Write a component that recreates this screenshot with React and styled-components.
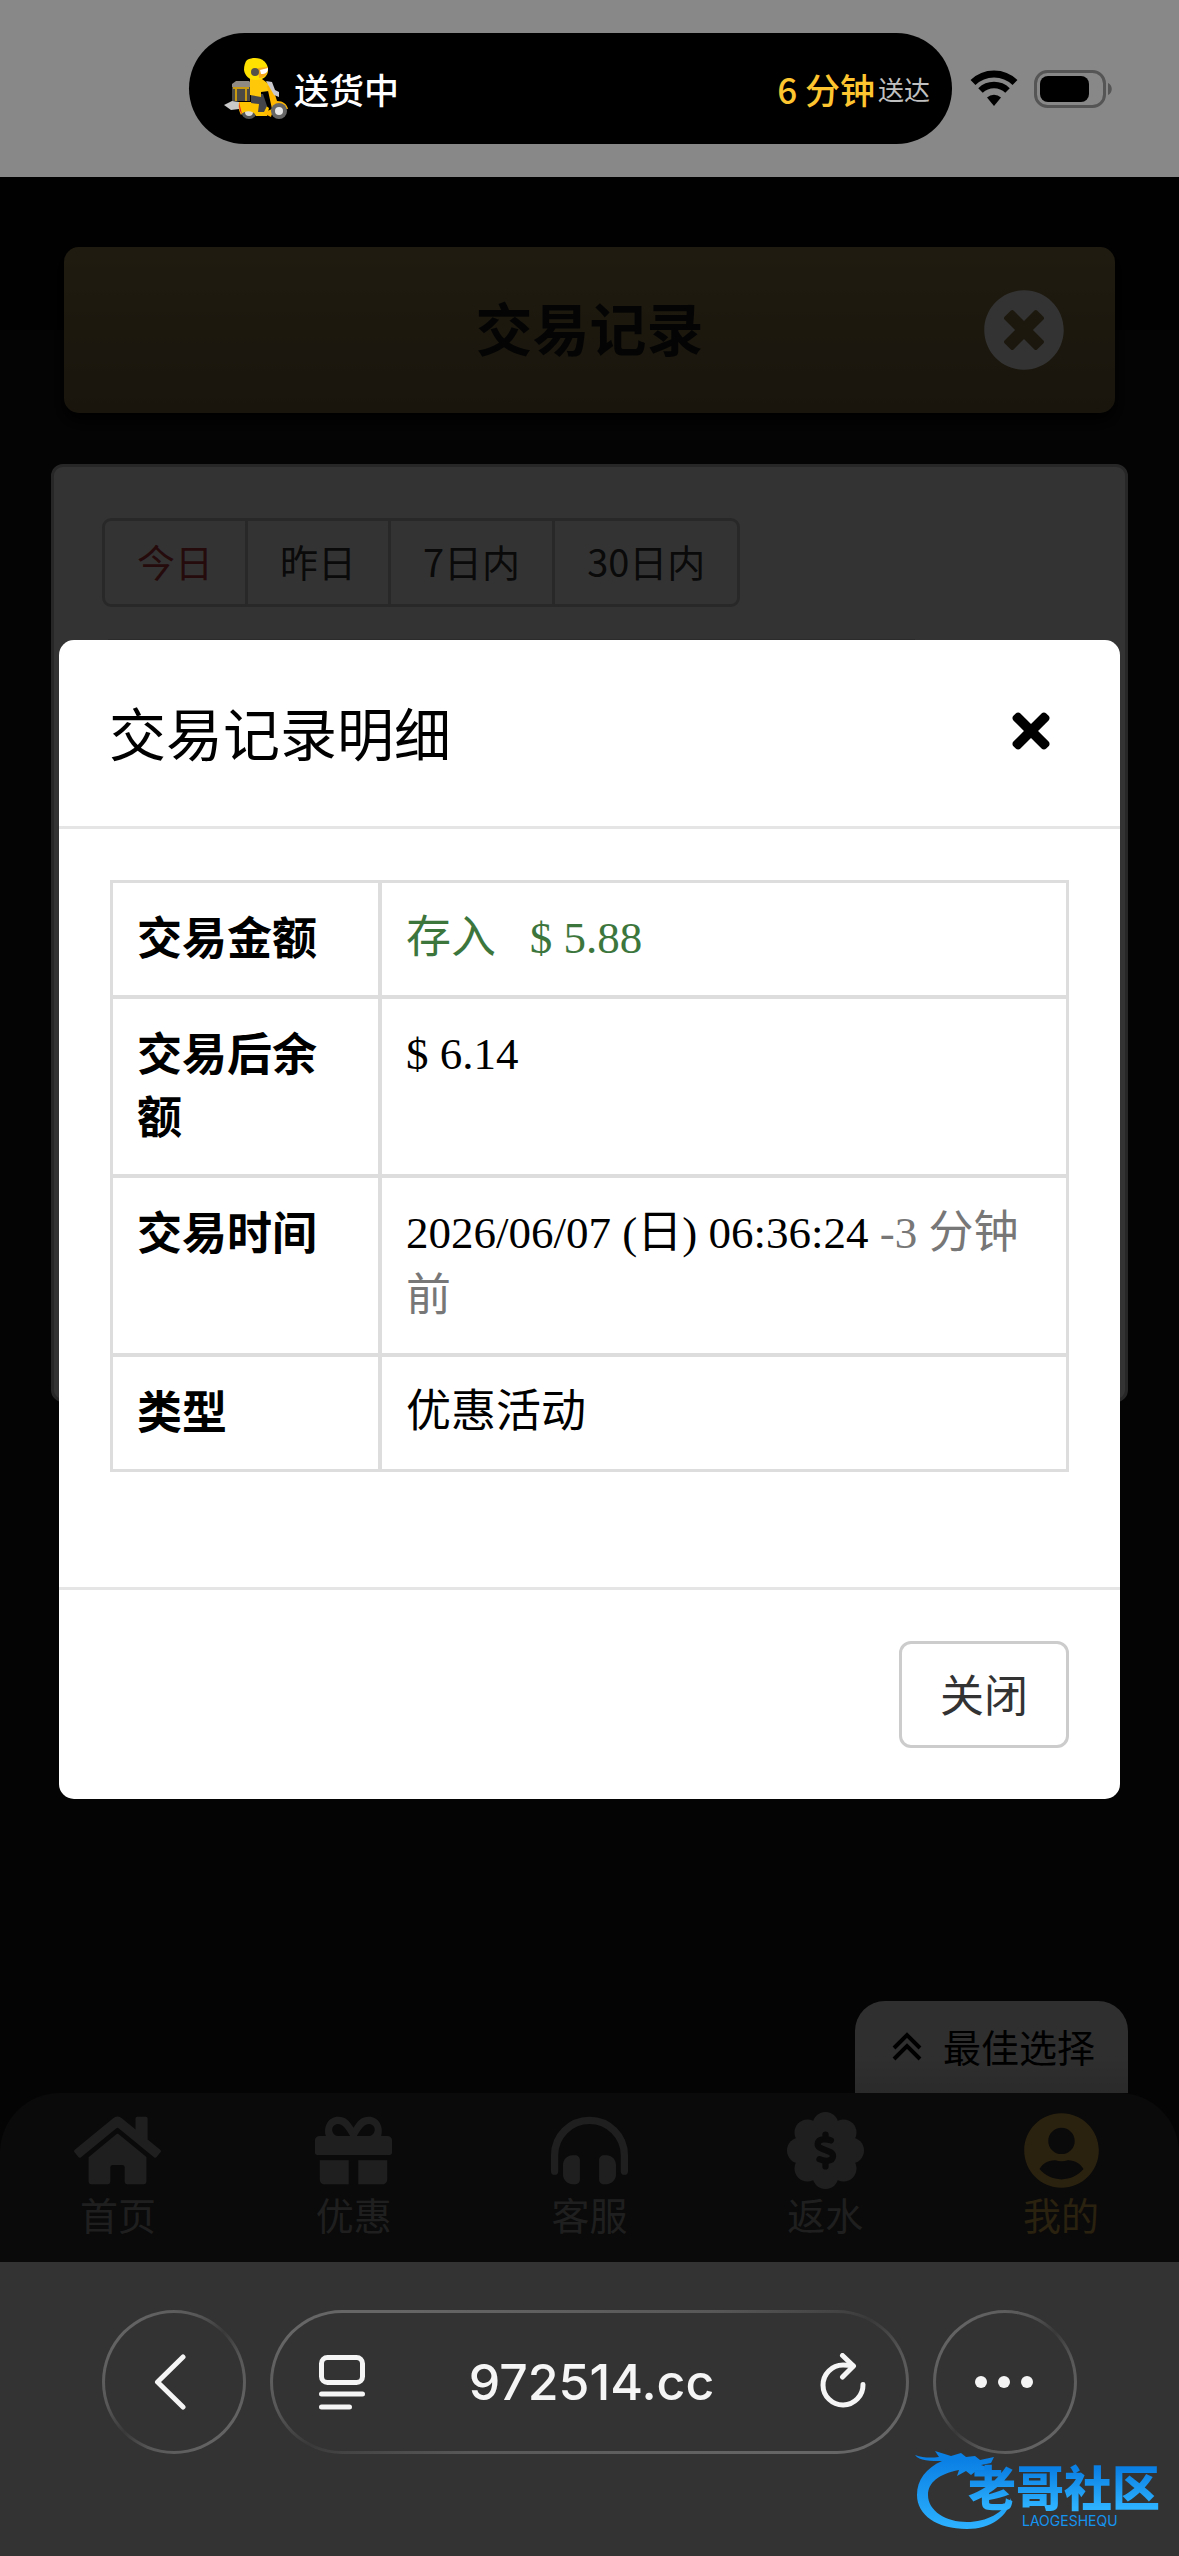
import React from 'react'
import styled, { createGlobalStyle } from 'styled-components'
import { FaHome, FaTimes, FaTimesCircle, FaUserCircle } from 'react-icons/fa'

const GlobalStyle = createGlobalStyle`
  * {
    box-sizing: border-box;
  }

  body {
    margin: 0;
    background-color: #333;
    font-family: "Noto Sans CJK SC", sans-serif;
    font-size: 38px;
    line-height: 54px;
    color: #000;
  }

  button, input {
    font: inherit;
    color: inherit;
    background: none;
    border: none;
    padding: 0;
  }

  button {
    cursor: pointer;
  }

  a {
    color: inherit;
    text-decoration: none;
  }

  svg {
    display: block;
    flex-shrink: 0;
  }
`;

const Screen = styled.div`
  position: relative;
  min-height: 100vh;
  display: flex;
  flex-direction: column;
  overflow: hidden;
`;

/* status bar */

const StatusBar = styled.header`
  height: 177px;
  display: flex;
  align-items: center;
  padding: 0 66px 0 189px;
  background-color: #888;
`;

const Island = styled.div`
  flex: 1;
  height: 111px;
  display: flex;
  align-items: center;
  gap: 6px;
  padding: 0 22px 0 34px;
  border-radius: 56px;
  background-color: #000;
  font-size: 35px;
  line-height: 50px;
  font-weight: 500;
  color: #fff;
`;

const Eta = styled.div`
  display: flex;
  align-items: center;
  gap: 3px;
  margin-left: auto;
  color: #fdc52f;
`;

const EtaNote = styled.span`
  font-size: 26px;
  font-weight: 400;
  color: #c0c0c0;
`;

const Indicators = styled.div`
  display: flex;
  gap: 16px;
  margin-left: 18px;
`;

/* page */

const Page = styled.div`
  position: relative;
  flex: 1;
  display: flex;
  flex-direction: column;
  background: linear-gradient(#060606 153px, #161616 153px);
`;

const Main = styled.main`
  flex: 1;
  display: flex;
  flex-direction: column;
  padding: 70px 51px 0;
`;

const TitleBar = styled.div`
  height: 166px;
  display: grid;
  grid-template-columns: 1fr auto 1fr;
  align-items: center;
  margin: 0 13px;
  padding: 0 50px;
  border-radius: 15px;
  background: linear-gradient(#9d8850, #7d6940);
  box-shadow: 0 8px 16px #000;
`;

const PageTitle = styled.h1`
  grid-column: 2;
  margin: 0;
  padding-bottom: 8px;
  font-size: 57px;
  line-height: 80px;
  font-weight: 700;
  color: #181818;
`;

const RoundClose = styled.button`
  justify-self: end;
  color: #fff;
`;

const Card = styled.section`
  min-height: 938px;
  margin-top: 51px;
  padding: 51px 48px;
  border: 3px solid #c4c4c4;
  border-radius: 12px;
  background-color: #fff;
`;

const RangeGroup = styled.div`
  display: flex;
  width: fit-content;
  border: 3px solid #c8c8c8;
  border-radius: 9px;
`;

const RangeButton = styled.button`
  height: 83px;
  padding: 0 32px 4px;
  color: ${({ $active }) => ($active ? '#b8393c' : '#333')};

  & + & {
    border-left: 3px solid #c8c8c8;
  }
`;

const Divider = styled.hr`
  margin: 32px 162px 0 6px;
  border: none;
  border-top: 3px solid #d4d4d4;
`;

const PromoTab = styled.button`
  height: 92px;
  display: flex;
  align-items: center;
  align-self: flex-end;
  gap: 20px;
  margin-top: auto;
  padding: 0 33px 2px 36px;
  border-radius: 30px 30px 0 0;
  background: linear-gradient(#e8e8e8 65%, #d2d2d2);
`;

const BottomNav = styled.nav`
  height: 169px;
  display: grid;
  grid-template-columns: repeat(5, 1fr);
  border-radius: 60px 60px 0 0;
  background-color: #323232;
`;

const NavLink = styled.a`
  display: flex;
  flex-direction: column;
  align-items: center;
  padding-top: 19px;
  line-height: 50px;
  color: ${({ $active }) => ($active ? '#d2a54b' : '#9a9a9a')};

  svg {
    width: 87px;
    height: 77px;
  }
`;

/* dialog */

const Backdrop = styled.div`
  position: absolute;
  inset: 0;
  padding: 463px 59px 0;
  background-color: rgba(0, 0, 0, 0.8);
`;

const Dialog = styled.section`
  border-radius: 15px;
  background-color: #fff;
  font-size: 45px;
  line-height: 63px;
`;

const DialogHeader = styled.div`
  height: 189px;
  display: flex;
  align-items: center;
  justify-content: space-between;
  padding: 0 62px 4px 50px;
  border-bottom: 3px solid #e5e5e5;
`;

const DialogTitle = styled.h2`
  margin: 0;
  font-size: 57px;
  line-height: 80px;
  font-weight: 400;
`;

const DialogBody = styled.div`
  padding: 51px 51px 115px;
`;

const DialogFooter = styled.div`
  display: flex;
  justify-content: flex-end;
  padding: 51px;
  border-top: 3px solid #e5e5e5;
`;

const DefaultButton = styled.button`
  height: 107px;
  padding: 0 38px 2px;
  border: 3px solid #ccc;
  border-radius: 12px;
  font-size: 44px;
  color: #333;
`;

const DetailTable = styled.table`
  width: 100%;
  table-layout: fixed;
  border: 3px solid #ddd;
  border-spacing: 0;

  th, td {
    padding: 24px 24px 25px;
    text-align: left;
    vertical-align: top;
  }

  th {
    width: 269px;
    padding: 21px 24px 28px;
    border-right: 4px solid #ddd;
    font-weight: 700;
  }

  td {
    font-family: "Liberation Serif", "Noto Sans CJK SC", serif;
  }

  tr + tr th, tr + tr td {
    border-top: 4px solid #ddd;
  }
`;

const Income = styled.span`
  color: #3c763d;
`;

const Muted = styled.span`
  color: #777;
`;

/* browser bar */

const BrowserBar = styled.footer`
  height: 294px;
  display: flex;
  align-items: flex-start;
  gap: 24px;
  padding: 48px 102px 0;
  background-color: #333;
  color: #f5f5f5;
`;

const glass = `
  height: 144px;
  border: 3px solid transparent;
  border-radius: 72px;
  background:
    linear-gradient(#333, #333) padding-box,
    linear-gradient(to bottom right, #666 10%, #585858 35%, #393939 50%, #585858 65%, #666 90%) border-box;
`;

const RoundButton = styled.button`
  ${glass}
  width: 144px;
  display: flex;
  align-items: center;
  justify-content: center;
`;

const AddressBar = styled.div`
  ${glass}
  flex: 1;
  min-width: 0;
  display: flex;
  align-items: center;
  padding: 0 40px 0 44px;
`;

const Address = styled.input`
  flex: 1;
  min-width: 0;
  font-family: Inter, sans-serif;
  font-size: 50px;
  line-height: 60px;
  font-weight: 500;
  text-align: center;
  outline: none;
`;

const Watermark = styled.div`
  position: absolute;
  right: 19px;
  bottom: 27px;
  color: #1593f0;
`;

const WatermarkDragon = styled.svg`
  position: absolute;
  right: 146px;
  bottom: 0;
`;

const WatermarkName = styled.div`
  position: relative;
  font-size: 48px;
  line-height: 56px;
  font-weight: 900;
  background: linear-gradient(#0a7fe4 20%, #2db2ff 90%);
  background-clip: text;
  color: transparent;
`;

const WatermarkLatin = styled.div`
  padding-left: 54px;
  font-family: Inter, sans-serif;
  font-size: 14px;
  line-height: 16px;
`;

const Scooter = () => (
  <svg width="65" height="62" viewBox="0 0 65 62">
    <path d="M1 47l8-4 7 1v7l-8 1z" fill="#c9c9c9" />
    <path d="M9 26l4-3h13l3 3-2 4H9z" fill="#8f8a83" />
    <path d="M9 29h18v14H9z" fill="#4b4a45" />
    <path d="M10 30h16M13 30v13M23 30v13" stroke="#c79a12" strokeWidth="2" fill="none" />
    <circle cx="26" cy="53" r="8" fill="#555" />
    <circle cx="26" cy="54" r="4" fill="#ddd" />
    <path d="M16 44h22l8 6-2 8H33c-2-6-12-6-15-1-2-4-3-8-2-13z" fill="#ffc400" />
    <path d="M16 44l3 12c-2-1-3-6-3-12z" fill="#e5202a" />
    <path d="M28 36h12l4 12-3 6h-6l1-8-8-1z" fill="#44454a" />
    <path d="M27 20l12 1 8 6-1 6-8 1v5l-11-2z" fill="#ffc808" />
    <path d="M44 28l5-1 5 16c6 0 10 3 11 8h-9c-4 0-7 4-8 8l-8-4 9-4z" fill="#ffb700" />
    <path d="M43 23l6 1 3 8 4 2v5l-5-2z" fill="#c9c9cd" />
    <circle cx="56" cy="53" r="8" fill="#666" />
    <circle cx="56" cy="53" r="4" fill="#e8e8e8" />
    <path d="M24 2c10-5 21 0 21 10 0 7-6 10-12 10-7 0-11-4-12-10 0-4 1-8 3-10z" fill="#ffe100" />
    <path d="M35 10l10-1c0 7-3 11-9 11z" fill="#f6a81c" />
    <path d="M37 12l8-2c0 4-2 6-7 6z" fill="#fff" />
    <circle cx="32" cy="14" r="4" fill="#54504a" />
  </svg>
)

const Wifi = () => (
  <svg width="48" height="36" viewBox="0 0 48 36" fill="none" stroke="#000">
    <path d="M3 12.500a30 30 0 0 1 42 0" strokeWidth="7" />
    <path d="M10.500 20.500a19.500 19.500 0 0 1 27 0" strokeWidth="6.500" />
    <path d="M24 36l-7-8.500a10.500 10.500 0 0 1 14 0z" fill="#000" stroke="none" />
  </svg>
)

const Battery = () => (
  <svg width="79" height="38" viewBox="0 0 79 38">
    <rect x="1.500" y="1.500" width="69" height="35" rx="12" fill="none" stroke="#555" strokeWidth="3" />
    <rect x="6" y="6" width="49" height="26" rx="8" fill="#000" />
    <path d="M74 13c5 2 5 10 0 12z" fill="#555" />
  </svg>
)

const GiftIcon = () => (
  <svg viewBox="0 0 512 512" fill="currentColor">
    <path d="M32 160h40c-18-64 18-128 82-128 48 0 72 26 102 72 30-46 54-72 102-72 64 0 100 64 82 128h40c18 0 32 12 32 28v82c0 9-7 16-16 16H16c-9 0-16-7-16-16v-82c0-16 14-28 32-28zm114 0h88c-30-52-52-80-80-80-46 0-56 62-8 80zm132 0h88c48-18 38-80-8-80-28 0-50 28-80 80z" fillRule="evenodd" />
    <path d="M32 320h192v160H64c-18 0-32-14-32-32zM288 320h192v128c0 18-14 32-32 32H288z" />
  </svg>
)

const HeadphonesIcon = () => (
  <svg viewBox="0 0 512 512" fill="currentColor">
    <path d="M24 394V288a232 232 0 0 1 464 0v106" fill="none" stroke="currentColor" strokeWidth="48" strokeLinecap="round" />
    <path d="M144 288h16c18 0 32 14 32 32v128c0 18-14 32-32 32h-16c-36 0-64-29-64-64v-64c0-35 28-64 64-64zM368 288h-16c-18 0-32 14-32 32v128c0 18 14 32 32 32h16c36 0 64-29 64-64v-64c0-35-28-64-64-64z" />
  </svg>
)

const DollarBadge = () => (
  <svg viewBox="0 0 512 512">
    <g fill="currentColor">
      <circle cx="256" cy="256" r="190" />
      <circle cx="256" cy="86" r="86" />
      <circle cx="256" cy="426" r="86" />
      <circle cx="86" cy="256" r="86" />
      <circle cx="426" cy="256" r="86" />
      <circle cx="136" cy="136" r="86" />
      <circle cx="376" cy="136" r="86" />
      <circle cx="136" cy="376" r="86" />
      <circle cx="376" cy="376" r="86" />
    </g>
    <path d="M256 150v24M256 340v22M292 189c-30-12-84-14-88 23-4 46 104 34 102 82-2 40-58 34-90 20" fill="none" stroke="#323232" strokeWidth="42" strokeLinecap="round" strokeLinejoin="round" />
  </svg>
)

const ChevronsUp = () => (
  <svg width="32" height="30" viewBox="0 0 32 30" fill="none" stroke="#000" strokeWidth="4">
    <path d="M3 17L16 4l13 13M3 28l13-13 13 13" />
  </svg>
)

const Dragon = () => (
  <WatermarkDragon width="100" height="80" viewBox="0 0 100 80" aria-hidden="true">
    <defs>
      <linearGradient id="dragon" x1="0" y1="0" x2="0" y2="1">
        <stop offset="0.1" stopColor="#0a7fe4" />
        <stop offset="1" stopColor="#2db2ff" />
      </linearGradient>
    </defs>
    <path
      d="M1 6c8 3 16 3 24 2l-4-6 16 5 10-3 5 4 9-1 5 4 14-3-3 6-10 2 9 3-3 6-11-3-5 4-5-4-9 5 2-6C24 25 14 34 14 46c0 16 18 27 39 27 20 0 36-9 44-24-2 18-20 31-44 31C23 80 3 66 3 46 3 31 12 19 28 12 17 12 5 12 1 6z"
      fill="url(#dragon)"
    />
  </WatermarkDragon>
)

const ranges = ['今日', '昨日', '7日内', '30日内']

const navItems = [
  { label: '首页', icon: <FaHome /> },
  { label: '优惠', icon: <GiftIcon /> },
  { label: '客服', icon: <HeadphonesIcon /> },
  { label: '返水', icon: <DollarBadge /> },
  { label: '我的', icon: <FaUserCircle />, active: true },
]

const TransactionDialog = () => (
  <Dialog role="dialog" aria-labelledby="dialog-title">
    <DialogHeader>
      <DialogTitle id="dialog-title">交易记录明细</DialogTitle>
      <button type="button" aria-label="关闭"><FaTimes size={54} /></button>
    </DialogHeader>
    <DialogBody>
      <DetailTable>
        <tbody>
          <tr>
            <th scope="row">交易金额</th>
            <td><Income>存入{'\u00a0\u00a0 '}$ 5.88</Income></td>
          </tr>
          <tr>
            <th scope="row">交易后余额</th>
            <td>$ 6.14</td>
          </tr>
          <tr>
            <th scope="row">交易时间</th>
            <td>2026/06/07 (日) 06:36:24 <Muted>-3 分钟前</Muted></td>
          </tr>
          <tr>
            <th scope="row">类型</th>
            <td>优惠活动</td>
          </tr>
        </tbody>
      </DetailTable>
    </DialogBody>
    <DialogFooter>
      <DefaultButton type="button">关闭</DefaultButton>
    </DialogFooter>
  </Dialog>
)

const App = () => (
  <Screen>
    <GlobalStyle />
    <StatusBar>
      <Island>
        <Scooter />
        <span>送货中</span>
        <Eta>
          <span>6 分钟</span>
          <EtaNote>送达</EtaNote>
        </Eta>
      </Island>
      <Indicators>
        <Wifi />
        <Battery />
      </Indicators>
    </StatusBar>

    <Page>
      <Main>
        <TitleBar>
          <PageTitle>交易记录</PageTitle>
          <RoundClose type="button" aria-label="关闭"><FaTimesCircle size={82} /></RoundClose>
        </TitleBar>
        <Card>
          <RangeGroup>
            {ranges.map((range, i) => (
              <RangeButton key={range} type="button" $active={i === 0}>{range}</RangeButton>
            ))}
          </RangeGroup>
          <Divider />
        </Card>
        <PromoTab type="button">
          <ChevronsUp />
          最佳选择
        </PromoTab>
      </Main>
      <BottomNav>
        {navItems.map(({ label, icon, active }) => (
          <NavLink key={label} href="#" $active={active}>
            {icon}
            {label}
          </NavLink>
        ))}
      </BottomNav>
      <Backdrop>
        <TransactionDialog />
      </Backdrop>
    </Page>

    <BrowserBar>
      <RoundButton type="button" aria-label="返回">
        <svg width="40" height="60" viewBox="0 0 40 60" fill="none" stroke="currentColor" strokeWidth="5" strokeLinecap="round" strokeLinejoin="round">
          <path d="M29 5L3.500 30 29 55" />
        </svg>
      </RoundButton>
      <AddressBar>
        <svg width="48" height="56" viewBox="0 0 48 56" fill="none" stroke="currentColor" strokeWidth="5" strokeLinecap="round">
          <rect x="4.500" y="3.500" width="41" height="25" rx="6" />
          <path d="M4.500 40h41M4.500 53h28" />
        </svg>
        <Address type="text" aria-label="地址" defaultValue="972514.cc" />
        <svg width="48" height="58" viewBox="0 0 48 58" fill="none" stroke="currentColor" strokeWidth="5" strokeLinecap="round" strokeLinejoin="round">
          <path d="M45 31.500a20 20 0 1 1-20-19.500q5 0 10 1" />
          <path d="M24.500 2.500L35.500 13l-11 11" />
        </svg>
      </AddressBar>
      <RoundButton type="button" aria-label="更多">
        <svg width="60" height="12" viewBox="0 0 60 12" fill="currentColor">
          <circle cx="6" cy="6" r="6" />
          <circle cx="29" cy="6" r="6" />
          <circle cx="52" cy="6" r="6" />
        </svg>
      </RoundButton>
    </BrowserBar>

    <Watermark>
      <Dragon />
      <WatermarkName>老哥社区</WatermarkName>
      <WatermarkLatin>LAOGESHEQU</WatermarkLatin>
    </Watermark>
  </Screen>
)

export default App
